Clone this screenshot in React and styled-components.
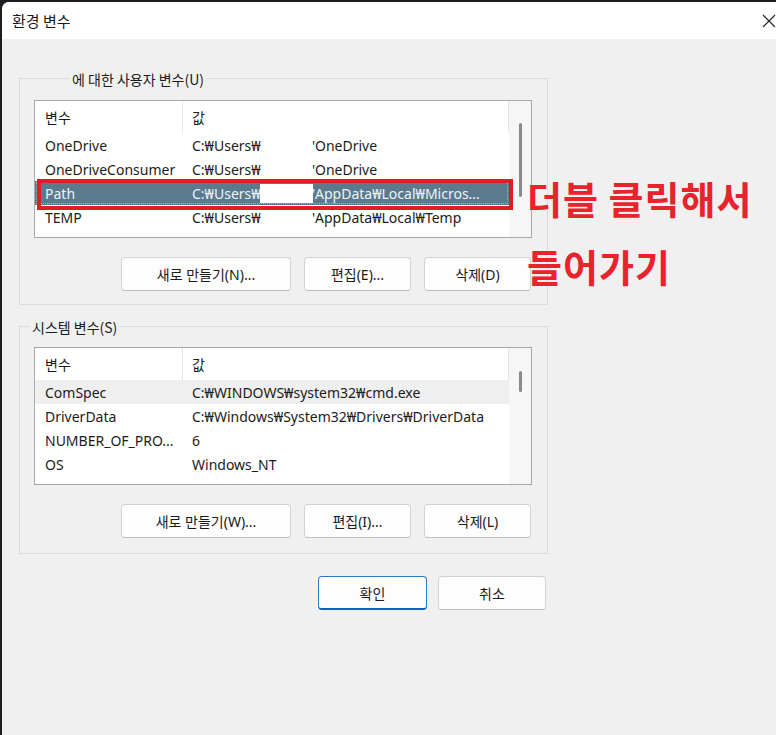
import React from 'react';
import styled, { createGlobalStyle } from 'styled-components';

const GlobalStyle = createGlobalStyle`
  html, body {
    margin: 0;
    padding: 0;
    background: #1e1e1e;
  }
  body {
    font-family: "Noto Sans", "Noto Sans CJK KR", sans-serif;
    font-size: 14px;
    color: #1b1b1b;
  }
`;

const userVars = [
  { name: 'OneDrive', pre: 'C:₩Users₩', post: 'OneDrive' },
  { name: 'OneDriveConsumer', pre: 'C:₩Users₩', post: 'OneDrive' },
  { name: 'Path', pre: 'C:₩Users₩', post: 'AppData₩Local₩Micros...', selected: true },
  { name: 'TEMP', pre: 'C:₩Users₩', post: 'AppData₩Local₩Temp' },
];

const systemVars = [
  { name: 'ComSpec', value: 'C:₩WINDOWS₩system32₩cmd.exe', hover: true },
  { name: 'DriverData', value: 'C:₩Windows₩System32₩Drivers₩DriverData' },
  { name: 'NUMBER_OF_PRO...', value: '6' },
  { name: 'OS', value: 'Windows_NT' },
];

const Window = styled.div`
  margin: 2px 0 0 2px;
  min-height: calc(100vh - 2px);
  background: #f0f0f0;
  border-top-left-radius: 7px;
  overflow: hidden;
`;

const TitleBar = styled.div`
  height: 37px;
  background: #ffffff;
  display: flex;
  align-items: center;
  justify-content: space-between;
  padding: 0 0 0 10px;
`;

const Title = styled.span`
  font-family: "Noto Sans CJK KR", sans-serif;
  font-size: 15px;
  color: #1a1a1a;
`;

const CloseBtn = styled.div`
  width: 40px;
  height: 37px;
  display: flex;
  align-items: center;
  justify-content: flex-end;
`;

const Body = styled.div`
  position: relative;
  padding: 39px 0 0 17px;
  width: 529px;
`;

const Group = styled.div`
  border: 1px solid #dcdcdc;
  margin-top: ${(p) => p.$top}px;
  padding: 0 15px ${(p) => p.$bottom}px 14px;
`;

const Legend = styled.div`
  width: fit-content;
  height: 20px;
  line-height: 20px;
  margin: -10px 0 0 ${(p) => p.$indent}px;
  padding: 0 2px;
  background: #f0f0f0;
  font-family: "Noto Sans CJK KR", sans-serif;
  font-size: 14px;
  color: #1b1b1b;
`;

const ListBox = styled.div`
  position: relative;
  margin-top: ${(p) => p.$top}px;
  height: 136px;
  border: 1px solid #a9a9a9;
  background: #ffffff;
  display: flex;
`;

const ListContent = styled.div`
  flex: 1;
  overflow: hidden;
`;

const Header = styled.div`
  display: flex;
  height: 32px;
`;

const HeaderCell = styled.div`
  width: ${(p) => (p.$w ? `${p.$w}px` : 'auto')};
  flex: ${(p) => (p.$w ? 'none' : '1')};
  box-sizing: border-box;
  padding-left: ${(p) => p.$pad}px;
  display: flex;
  align-items: center;
  border-right: 1px solid #e6e6e6;
  font-family: "Noto Sans CJK KR", sans-serif;
`;

const Row = styled.div`
  position: relative;
  display: flex;
  align-items: center;
  height: 24px;
  white-space: nowrap;
  background: ${(p) => (p.$selected ? '#5b7a8e' : p.$hover ? '#efefef' : 'transparent')};
  color: ${(p) => (p.$selected ? '#eef3f6' : '#1b1b1b')};
  ${(p) => p.$selected && 'outline: 1px dotted #9fb3c0; outline-offset: -2px;'}
`;

const NameCell = styled.div`
  width: 148px;
  box-sizing: border-box;
  padding-left: 10px;
  overflow: hidden;
`;

const ValueCell = styled.div`
  flex: 1;
  padding-left: 9px;
  display: flex;
  align-items: center;
  overflow: hidden;
`;

const Pre = styled.span`
  display: inline-block;
  width: 68px;
`;

const Redact = styled.span`
  display: inline-block;
  width: 53px;
  height: 19px;
  background: ${(p) => (p.$white ? '#ffffff' : 'transparent')};
`;

const Stub = styled.span`
  display: inline-block;
  width: 3px;
  margin-left: -1px;
`;

const ScrollTrack = styled.div`
  width: 22px;
  background: #f6f6f6;
  display: flex;
  justify-content: center;
`;

const Thumb = styled.div`
  width: 3px;
  border-radius: 2px;
  background: #8a8a8a;
  margin-top: ${(p) => p.$top}px;
  height: ${(p) => p.$h}px;
`;

const RedBox = styled.div`
  position: absolute;
  left: 2px;
  top: 78px;
  width: 476px;
  height: 31px;
  box-sizing: border-box;
  border: 4px solid #e21c24;
  pointer-events: none;
`;

const ButtonRow = styled.div`
  display: flex;
  justify-content: flex-end;
  gap: 13px;
  margin-top: 19px;
  padding-right: 1px;
`;

const Button = styled.button`
  width: ${(p) => p.$w}px;
  height: 34px;
  box-sizing: border-box;
  background: #fdfdfd;
  border: 1px solid ${(p) => (p.$primary ? '#2a7ac4' : '#d3d3d3')};
  border-bottom: ${(p) => (p.$primary ? '2px solid #1463b0' : '1px solid #bdbdbd')};
  border-radius: 4px;
  font-family: "Noto Sans", "Noto Sans CJK KR", sans-serif;
  font-size: 14px;
  color: #1b1b1b;
  padding: 0;
`;

const Footer = styled.div`
  display: flex;
  justify-content: flex-end;
  gap: 11px;
  margin-top: 22px;
  padding-right: 2px;
`;

const Annotation = styled.div`
  position: absolute;
  left: 525px;
  top: 125px;
  font-family: "Noto Sans CJK KR", sans-serif;
  font-weight: 700;
  font-size: 38px;
  line-height: 68px;
  color: #e8232b;
  white-space: nowrap;
  letter-spacing: 1px;
`;

const CloseIcon = () => (
  <svg width="14" height="14" viewBox="0 0 14 14">
    <path d="M1 1 L13 13 M13 1 L1 13" stroke="#222" strokeWidth="1.1" fill="none" />
  </svg>
);

const ListHeader = () => (
  <Header>
    <HeaderCell $w={148} $pad={10}>변수</HeaderCell>
    <HeaderCell $pad={9}>값</HeaderCell>
  </Header>
);

export default function App() {
  return (
    <>
      <GlobalStyle />
      <Window>
        <TitleBar>
          <Title>환경 변수</Title>
          <CloseBtn>
            <CloseIcon />
          </CloseBtn>
        </TitleBar>
        <Body>
          <Group $top={0} $bottom={13}>
            <Legend $indent={36}>에 대한 사용자 변수(U)</Legend>
            <ListBox $top={11}>
              <ListContent>
                <ListHeader />
                {userVars.map((v) => (
                  <Row key={v.name} $selected={v.selected}>
                    <NameCell>{v.name}</NameCell>
                    <ValueCell>
                      <Pre>{v.pre}</Pre>
                      <Redact $white={v.selected} />
                      <Stub>'</Stub>
                      <span>{v.post}</span>
                    </ValueCell>
                  </Row>
                ))}
              </ListContent>
              <ScrollTrack>
                <Thumb $top={22} $h={74} />
              </ScrollTrack>
              <RedBox />
            </ListBox>
            <ButtonRow>
              <Button $w={170}>새로 만들기(N)...</Button>
              <Button $w={107}>편집(E)...</Button>
              <Button $w={107}>삭제(D)</Button>
            </ButtonRow>
          </Group>

          <Group $top={21} $bottom={15}>
            <Legend $indent={-4}>시스템 변수(S)</Legend>
            <ListBox $top={10}>
              <ListContent>
                <ListHeader />
                {systemVars.map((v) => (
                  <Row key={v.name} $hover={v.hover}>
                    <NameCell>{v.name}</NameCell>
                    <ValueCell>{v.value}</ValueCell>
                  </Row>
                ))}
              </ListContent>
              <ScrollTrack>
                <Thumb $top={23} $h={21} />
              </ScrollTrack>
            </ListBox>
            <ButtonRow>
              <Button $w={170}>새로 만들기(W)...</Button>
              <Button $w={107}>편집(I)...</Button>
              <Button $w={107}>삭제(L)</Button>
            </ButtonRow>
          </Group>

          <Footer>
            <Button $w={109} $primary>확인</Button>
            <Button $w={108}>취소</Button>
          </Footer>

          <Annotation>
            더블 클릭해서
            <br />
            들어가기
          </Annotation>
        </Body>
      </Window>
    </>
  );
}
